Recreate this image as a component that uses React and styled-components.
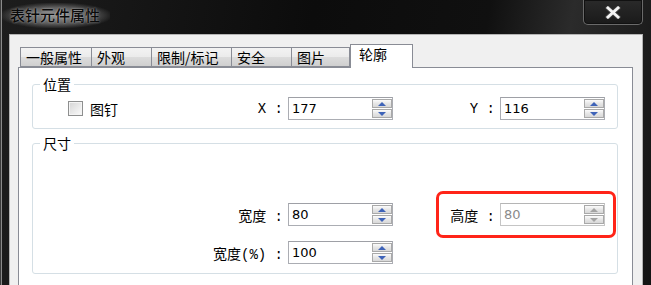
import React from 'react';
import styled, { createGlobalStyle } from 'styled-components';

const Global = createGlobalStyle`
  html, body { margin: 0; padding: 0; background: #000; }
  body { font-family: "Noto Sans CJK SC", "Liberation Sans", sans-serif; }
`;

const Window = styled.div`
  width: 651px;
  height: 285px;
  overflow: hidden;
  display: flex;
  flex-direction: column;
  background: linear-gradient(100deg, #1d1d1d 0%, #0c0c0c 45%, #101010 70%, #2b2b2b 82%, #141414 100%);
  box-shadow: inset 1px 0 0 #3a3a3a, inset 2px 0 0 #8a8a8a;
`;

const TitleBar = styled.div`
  height: 34px;
  flex: none;
  display: flex;
  justify-content: space-between;
  align-items: flex-start;
`;

const Title = styled.div`
  margin: 3px 0 0 2px;
  padding: 2px 10px 3px 8px;
  font-size: 15px;
  line-height: 20px;
  font-weight: 500;
  color: #0a0a0a;
  background: radial-gradient(ellipse at center, rgba(190,190,190,0.75) 0%, rgba(150,150,150,0.55) 45%, rgba(60,60,60,0) 75%);
  text-shadow: 0 0 2px rgba(220,220,220,0.7);
`;

const CloseButton = styled.div`
  width: 58px;
  height: 24px;
  margin-right: 8px;
  display: flex;
  align-items: center;
  justify-content: center;
  border: 1px solid #6a6a6a;
  border-top: none;
  border-radius: 0 0 5px 5px;
  background: linear-gradient(#2a2a2a, #1a1a1a);
  box-shadow: inset 0 0 0 1px #111;
`;

const Frame = styled.div`
  flex: 1;
  display: flex;
  padding: 0 8px 0 9px;
`;

const Client = styled.div`
  flex: 1;
  display: flex;
  flex-direction: column;
  background: #f0f0f0;
  border: 1px solid #b4b4b4;
  border-bottom: none;
  padding: 9px 9px 0 8px;
`;

const TabStrip = styled.div`
  display: flex;
  align-items: flex-end;
  height: 23px;
  padding-left: 2px;
  position: relative;
  z-index: 1;
`;

const Tab = styled.div`
  box-sizing: border-box;
  width: ${p => p.$w}px;
  height: ${p => (p.$active ? 24 : 20)}px;
  margin-bottom: ${p => (p.$active ? -1 : 0)}px;
  padding-left: ${p => (p.$active ? 8 : 5)}px;
  font-size: 14px;
  line-height: ${p => (p.$active ? 18 : 19)}px;
  color: #000;
  border: 1px solid #898c95;
  border-bottom: ${p => (p.$active ? 'none' : '1px solid #898c95')};
  border-left: ${p => (p.$first || p.$active ? '1px solid #898c95' : 'none')};
  background: ${p => (p.$active ? '#fff' : 'linear-gradient(#f3f3f3, #ebebeb 50%, #dcdcdc 51%, #cfcfcf)')};
`;

const Panel = styled.div`
  flex: 1;
  background: #fff;
  border: 1px solid #898c95;
  border-bottom: none;
  padding: 8px 14px 0 13px;
  display: flex;
  flex-direction: column;
  gap: 6px;
`;

const Group = styled.fieldset`
  margin: 0;
  padding: ${p => p.$pad};
  border: 1px solid #d5dfe5;
  border-radius: 3px;
  min-width: 0;
`;

const Legend = styled.legend`
  margin-left: 7px;
  padding: 0 3px;
  font-size: 14px;
  line-height: 16px;
  color: #000;
`;

const Grid = styled.div`
  position: relative;
  display: grid;
  grid-template-columns: 255px 105px 107px 106px;
  row-gap: 15px;
`;

const Cell = styled.div`
  display: flex;
  align-items: center;
  justify-content: ${p => (p.$spread ? 'space-between' : 'flex-end')};
  padding-right: 5px;
`;

const Label = styled.span`
  font-family: "Liberation Mono", "Noto Sans CJK SC", monospace;
  font-size: 14px;
  color: #000;
  white-space: pre;
`;

const Check = styled.label`
  display: flex;
  align-items: center;
  gap: 7px;
  margin-left: 35px;
  font-size: 14px;
  color: #000;
`;

const Box = styled.span`
  width: 13px;
  height: 13px;
  border: 1px solid #8e8f8f;
  background: linear-gradient(135deg, #d4d4d4, #ececec 60%, #fafafa);
  box-shadow: inset 0 0 0 1px #f4f4f4;
`;

const Spin = styled.div`
  box-sizing: border-box;
  width: 105px;
  height: 23px;
  display: flex;
  align-items: center;
  justify-content: space-between;
  border: 1px solid ${p => (p.$disabled ? '#c5c5c5' : '#abadb3')};
  border-top-color: ${p => (p.$disabled ? '#b5b5b5' : '#9ea0a6')};
  background: #fff;
  padding: 0 0 0 3px;
`;

const Value = styled.span`
  font-family: "DejaVu Sans", "Liberation Sans", sans-serif;
  font-size: 13px;
  color: ${p => (p.$disabled ? '#8a8a8a' : '#000')};
`;

const Buttons = styled.div`
  display: flex;
  flex-direction: column;
  gap: 1px;
`;

const SpinBtn = styled.div`
  box-sizing: border-box;
  width: 20px;
  height: 9px;
  display: flex;
  align-items: center;
  justify-content: center;
  border: 1px solid #a9a9a9;
  background: linear-gradient(#fbfbfb, #e6e6e6 50%, #d8d8d8);
`;

const Arrow = styled.span`
  width: 0;
  height: 0;
  border-left: 4px solid transparent;
  border-right: 4px solid transparent;
  ${p => (p.$down ? 'border-top' : 'border-bottom')}: 4px solid ${p => (p.$disabled ? '#a3a3a3' : '#3e63b8')};
`;

const Highlight = styled.div`
  position: absolute;
  left: 403px;
  top: -12px;
  width: 174px;
  height: 41px;
  border: 3px solid #ff2418;
  border-radius: 7px;
  pointer-events: none;
`;

const Spinner = ({ value, disabled }) => (
  <Spin $disabled={disabled}>
    <Value $disabled={disabled}>{value}</Value>
    <Buttons>
      <SpinBtn><Arrow $disabled={disabled} /></SpinBtn>
      <SpinBtn><Arrow $down $disabled={disabled} /></SpinBtn>
    </Buttons>
  </Spin>
);

const tabs = [
  { name: '一般属性', w: 72 },
  { name: '外观', w: 60 },
  { name: '限制/标记', w: 80 },
  { name: '安全', w: 60 },
  { name: '图片', w: 58 },
  { name: '轮廓', w: 63, active: true },
];

export default function App() {
  return (
    <>
      <Global />
      <Window>
        <TitleBar>
          <Title>表针元件属性</Title>
          <CloseButton>
            <svg width="16" height="13" viewBox="0 0 16 13">
              <path d="M3 2 L13 11 M13 2 L3 11" stroke="#3a3a3a" strokeWidth="5" strokeLinecap="square" />
              <path d="M3 2 L13 11 M13 2 L3 11" stroke="#f4f4f4" strokeWidth="3" strokeLinecap="square" />
            </svg>
          </CloseButton>
        </TitleBar>
        <Frame>
          <Client>
            <TabStrip>
              {tabs.map((t, i) => (
                <Tab key={t.name} $w={t.w} $active={t.active} $first={i === 0}>{t.name}</Tab>
              ))}
            </TabStrip>
            <Panel>
              <Group $pad="5px 10px 8px 0">
                <Legend>位置</Legend>
                <Grid>
                  <Cell $spread>
                    <Check><Box />图钉</Check>
                    <Label>X :</Label>
                  </Cell>
                  <Spinner value="177" />
                  <Cell><Label>Y :</Label></Cell>
                  <Spinner value="116" />
                </Grid>
              </Group>
              <Group $pad="52px 10px 9px 0">
                <Legend>尺寸</Legend>
                <Grid>
                  <Cell><Label>宽度 :</Label></Cell>
                  <Spinner value="80" />
                  <Cell><Label>高度 :</Label></Cell>
                  <Spinner value="80" disabled />
                  <Cell><Label>宽度(%) :</Label></Cell>
                  <Spinner value="100" />
                  <Highlight />
                </Grid>
              </Group>
            </Panel>
          </Client>
        </Frame>
      </Window>
    </>
  );
}
